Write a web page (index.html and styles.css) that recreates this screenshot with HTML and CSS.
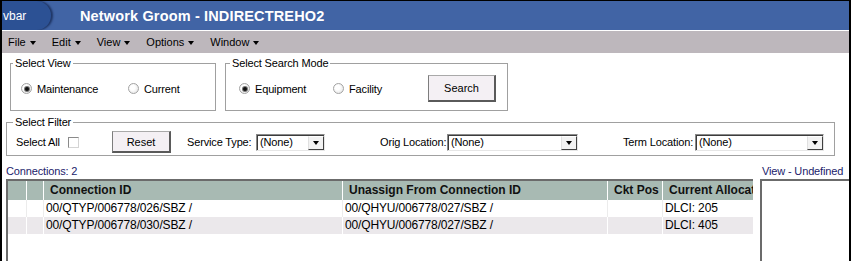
FILE: index.html
```html
<!DOCTYPE html>
<html>
<head>
<meta charset="utf-8">
<title>Network Groom</title>
<link rel="stylesheet" href="styles.css">
</head>
<body>
<div class="window">
  <div class="titlebar">
    <div class="navtab">vbar</div>
    <div class="title">Network Groom - INDIRECTREHO2</div>
  </div>
  <div class="menubar">
    <span class="menu">File<i class="caret"></i></span>
    <span class="menu">Edit<i class="caret"></i></span>
    <span class="menu">View<i class="caret"></i></span>
    <span class="menu">Options<i class="caret"></i></span>
    <span class="menu">Window<i class="caret"></i></span>
  </div>
  <div class="content">
    <div class="toprow">
      <div class="group view">
        <span class="legend">Select View</span>
        <div class="gbody">
          <label class="radio w-maint"><span class="rb checked"></span>Maintenance</label>
          <label class="radio"><span class="rb"></span>Current</label>
        </div>
      </div>
      <div class="group mode">
        <span class="legend">Select Search Mode</span>
        <div class="gbody">
          <label class="radio w-equip"><span class="rb checked"></span>Equipment</label>
          <label class="radio w-fac"><span class="rb"></span>Facility</label>
          <button class="btn search">Search</button>
        </div>
      </div>
    </div>
    <div class="group filter">
      <span class="legend">Select Filter</span>
      <div class="gbody">
        <span class="f-selall">Select All</span>
        <span class="chk"></span>
        <button class="btn reset">Reset</button>
        <span class="flabel l-service">Service Type:</span>
        <div class="combo w-service"><span class="val">(None)</span><span class="arrow"><i class="tri"></i></span></div>
        <span class="flabel l-orig">Orig Location:</span>
        <div class="combo w-orig"><span class="val">(None)</span><span class="arrow"><i class="tri"></i></span></div>
        <span class="flabel l-term">Term Location:</span>
        <div class="combo w-term"><span class="val">(None)</span><span class="arrow"><i class="tri"></i></span></div>
      </div>
    </div>
    <div class="main">
      <div class="leftcol">
        <div class="caption">Connections: 2</div>
        <div class="grid">
          <div class="row head">
            <div class="cell c1"></div>
            <div class="cell c2"></div>
            <div class="cell c3">Connection ID</div>
            <div class="cell c4">Unassign From Connection ID</div>
            <div class="cell c5">Ckt Pos</div>
            <div class="cell c6">Current Allocation</div>
          </div>
          <div class="row odd">
            <div class="cell c1"></div>
            <div class="cell c2"></div>
            <div class="cell c3">00/QTYP/006778/026/SBZ /</div>
            <div class="cell c4">00/QHYU/006778/027/SBZ /</div>
            <div class="cell c5"></div>
            <div class="cell c6">DLCI: 205</div>
          </div>
          <div class="row even">
            <div class="cell c1"></div>
            <div class="cell c2"></div>
            <div class="cell c3">00/QTYP/006778/030/SBZ /</div>
            <div class="cell c4">00/QHYU/006778/027/SBZ /</div>
            <div class="cell c5"></div>
            <div class="cell c6">DLCI: 405</div>
          </div>
        </div>
      </div>
      <div class="rightcol">
        <div class="caption rcap">View - Undefined</div>
        <div class="panel"></div>
      </div>
    </div>
  </div>
</div>
</body>
</html>
```
FILE: styles.css
```css
* { box-sizing: border-box; }
html, body { margin: 0; padding: 0; background: #fff; }
body {
  font-family: "Liberation Sans", Arial, sans-serif;
  font-size: 11px;
  letter-spacing: -0.15px;
  color: #000;
}
.window {
  width: 851px;
  height: 261px;
  border-left: 2px solid #000;
  border-right: 2px solid #000;
  border-top: 1px solid #000;
  overflow: hidden;
  display: flex;
  flex-direction: column;
  background: #fff;
}
.titlebar {
  flex: none;
  height: 29px;
  background: #4164a5;
  display: flex;
  align-items: center;
}
.navtab {
  flex: none;
  width: 49px;
  height: 29px;
  background: #2c5194;
  border-radius: 0 15px 15px 0;
  box-shadow: 2px 0 2px rgba(12, 28, 66, 0.65);
  display: flex;
  align-items: center;
  padding-left: 1px;
  color: #fff;
  font-size: 12px;
  letter-spacing: 0;
}
.title {
  margin-left: 29px;
  color: #fff;
  font-weight: bold;
  font-size: 14.5px;
  letter-spacing: 0.15px;
}
.menubar {
  flex: none;
  height: 23px;
  border-top: 1px solid #fff;
  background: #bdb7bc;
  display: flex;
  align-items: center;
  padding-left: 6px;
  gap: 16px;
}
.menu { display: flex; align-items: center; gap: 4px; letter-spacing: 0; }
.caret {
  width: 0; height: 0;
  border-left: 3.5px solid transparent;
  border-right: 3.5px solid transparent;
  border-top: 4px solid #000;
  margin-top: 2px;
}
.content {
  flex: 1;
  min-height: 0;
  display: flex;
  flex-direction: column;
  padding-left: 4px;
}
.toprow {
  display: flex;
  margin-top: 10px;
  padding-left: 4px;
  gap: 9px;
}
.group {
  border: 1px solid #a0a0a0;
  display: flex;
  flex-direction: column;
}
.legend {
  align-self: flex-start;
  margin: -7px 0 0 2px;
  padding: 0 2px;
  height: 13px;
  line-height: 13px;
  background: #fff;
}
.gbody {
  flex: 1;
  display: flex;
  align-items: center;
}
.view { width: 206px; height: 48px; }
.view .gbody { padding: 0 0 3px 10px; }
.mode { width: 283px; height: 48px; }
.mode .legend { margin-left: 4px; }
.mode .gbody { padding: 0 0 3px 13px; }
.radio { display: flex; align-items: center; gap: 5px; }
.w-maint { width: 107px; }
.w-equip { width: 94px; }
.w-fac { width: 95px; }
.rb {
  width: 11px; height: 11px;
  border-radius: 50%;
  border: 1px solid #a3a3a3;
  background: radial-gradient(circle at 40% 40%, #ffffff 30%, #dcdcdc 100%);
  display: flex;
  align-items: center;
  justify-content: center;
}
.rb.checked::after {
  content: "";
  width: 4px; height: 4px;
  border-radius: 50%;
  background: #111;
  box-shadow: 0 0 0 1px #777;
}
.btn {
  font: inherit;
  letter-spacing: 0;
  color: #000;
  background: #f4f0f4;
  border-style: solid;
  border-width: 1px 2px 2px 1px;
  border-color: #a9a9a9 #5a5a5a #5a5a5a #7d7d7d;
  padding: 0;
}
.search { width: 68px; height: 27px; }
.filter { width: 829px; height: 34px; margin-top: 11px; }
.filter .legend { margin-left: 6px; }
.filter .gbody { padding-left: 9px; }
.f-selall { width: 52px; }
.chk {
  width: 11px; height: 11px;
  background: #fff;
  border: 1px solid;
  border-color: #8a8a8a #d4d4d4 #d4d4d4 #8a8a8a;
}
.reset { width: 59px; height: 22px; margin-left: 33px; }
.flabel { white-space: nowrap; }
.l-service { width: 69px; margin-left: 16px; }
.l-orig { width: 67px; margin-left: 55px; }
.l-term { width: 72px; margin-left: 45px; }
.combo {
  height: 17px;
  display: flex;
  background: #fff;
  border: 1px solid;
  border-color: #8a8a8a #e6e6e6 #e6e6e6 #8a8a8a;
  box-shadow: inset 1px 1px 0 #3c3c3c;
}
.w-service { width: 69px; }
.w-orig { width: 131px; }
.w-term { width: 129px; }
.combo .val { flex: 1; padding-left: 3px; line-height: 15px; white-space: nowrap; }
.combo .arrow {
  width: 16px;
  margin: 1px 0 0 0;
  background: #f2f2f2;
  border: 1px solid;
  border-color: #ffffff #404040 #404040 #e0e0e0;
  display: flex;
  align-items: center;
  justify-content: center;
}
.tri {
  width: 0; height: 0;
  border-left: 3.5px solid transparent;
  border-right: 3.5px solid transparent;
  border-top: 4px solid #000;
}
.main {
  flex: 1;
  min-height: 0;
  display: flex;
  gap: 7px;
  margin-top: 7px;
}
.leftcol { width: 747px; display: flex; flex-direction: column; }
.rightcol { flex: 1; display: flex; flex-direction: column; }
.caption {
  flex: none;
  height: 16px;
  line-height: 16px;
  color: #1b1b6b;
  white-space: nowrap;
}
.rcap { padding-left: 2px; }
.grid {
  flex: 1;
  border-top: 2px solid #6b6b6b;
  border-left: 2px solid #6b6b6b;
  overflow: hidden;
}
.panel {
  flex: 1;
  border-top: 2px solid #6b6b6b;
  border-left: 2px solid #6b6b6b;
}
.row { display: flex; height: 17px; }
.row.head {
  height: 19px;
  background: #a8bab3;
  font-weight: bold;
  font-size: 12px;
  color: #111;
}
.row.odd { background: #fff; }
.row.even { background: #ebe8eb; }
.cell {
  flex: none;
  border-right: 1px solid #fff;
  white-space: nowrap;
  overflow: hidden;
  line-height: 17px;
  padding-left: 2px;
  font-size: 12px;
  letter-spacing: -0.15px;
}
.row.odd .cell { border-right-color: #ececec; }
.row.head .cell { line-height: 19px; padding-left: 6px; letter-spacing: 0; }
.c1 { width: 19px; }
.c2 { width: 17px; }
.c3 { width: 299px; }
.c4 { width: 265px; }
.c5 { width: 55px; }
.c6 { width: 90px; border-right: none; }
```
